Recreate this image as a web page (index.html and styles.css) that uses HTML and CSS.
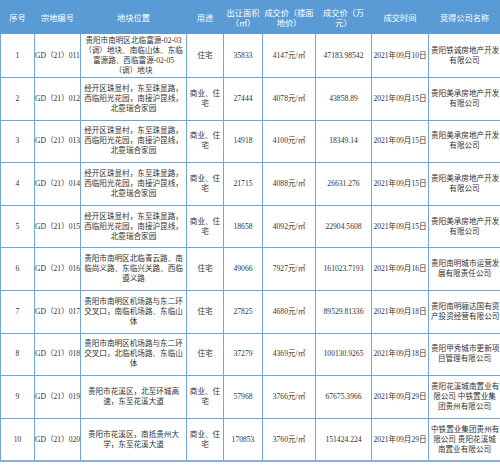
FILE: index.html
```html
<!DOCTYPE html>
<html lang="zh-CN">
<head>
<meta charset="utf-8">
<title>地块成交表</title>
<link rel="stylesheet" href="styles.css">
</head>
<body>
<table class="land">
  <colgroup>
    <col class="c-no"><col class="c-id"><col class="c-loc"><col class="c-use"><col class="c-area"><col class="c-unit"><col class="c-total"><col class="c-date"><col class="c-co">
  </colgroup>
  <thead>
    <tr class="head">
      <th>序号</th><th>宗地编号</th><th>地块位置</th><th>用途</th><th>出让面积<br>（㎡）</th><th>成交价（楼面<br>地价）</th><th>成交价（万<br>元）</th><th>成交时间</th><th>竞得公司名称</th>
    </tr>
  </thead>
  <tbody>
    <tr class="r-first">
      <td>1</td><td class="id">GD（21）011</td>
      <td class="txt">贵阳市南明区北临富源-02-03<br>（调）地块、南临山体、东临<br>富源路、西临富源-02-05<br>（调）地块</td>
      <td>住宅</td><td>35833</td><td>4147元/㎡</td><td>47183.98542</td><td>2021年09月10日</td>
      <td class="txt">贵阳铁诚房地产开发<br>有限公司</td>
    </tr>
    <tr>
      <td>2</td><td class="id">GD（21）012</td>
      <td class="txt">经开区珠显村，东至珠显路，<br>西临阳光花园，南接沪昆线，<br>北靠瑞合家园</td>
      <td>商业、住<br>宅</td><td>27444</td><td>4078元/㎡</td><td>43858.89</td><td>2021年09月15日</td>
      <td class="txt">贵阳美承房地产开发<br>有限公司</td>
    </tr>
    <tr>
      <td>3</td><td class="id">GD（21）013</td>
      <td class="txt">经开区珠显村，东至珠显路，<br>西临阳光花园，南接沪昆线，<br>北靠瑞合家园</td>
      <td>商业、住<br>宅</td><td>14918</td><td>4100元/㎡</td><td>18349.14</td><td>2021年09月15日</td>
      <td class="txt">贵阳美承房地产开发<br>有限公司</td>
    </tr>
    <tr>
      <td>4</td><td class="id">GD（21）014</td>
      <td class="txt">经开区珠显村，东至珠显路，<br>西临阳光花园，南接沪昆线，<br>北靠瑞合家园</td>
      <td>商业、住<br>宅</td><td>21715</td><td>4088元/㎡</td><td>26631.276</td><td>2021年09月15日</td>
      <td class="txt">贵阳美承房地产开发<br>有限公司</td>
    </tr>
    <tr>
      <td>5</td><td class="id">GD（21）015</td>
      <td class="txt">经开区珠显村，东至珠显路，<br>西临阳光花园，南接沪昆线，<br>北靠瑞合家园</td>
      <td>商业、住<br>宅</td><td>18658</td><td>4092元/㎡</td><td>22904.5608</td><td>2021年09月15日</td>
      <td class="txt">贵阳美承房地产开发<br>有限公司</td>
    </tr>
    <tr>
      <td>6</td><td class="id">GD（21）016</td>
      <td class="txt">贵阳市南明区北临青云路、南<br>临尚义路、东临兴关路、西临<br>遵义路</td>
      <td>住宅</td><td>49066</td><td>7927元/㎡</td><td>161023.7193</td><td>2021年09月16日</td>
      <td class="txt">贵阳南明城市运营发<br>展有限责任公司</td>
    </tr>
    <tr>
      <td>7</td><td class="id">GD（21）017</td>
      <td class="txt">贵阳市南明区机场路与东二环<br>交叉口，南临机场路、东临山<br>体</td>
      <td>住宅</td><td>27825</td><td>4680元/㎡</td><td>89529.81336</td><td>2021年09月18日</td>
      <td class="txt">贵阳南明骊达国有资<br>产投资经营有限公司</td>
    </tr>
    <tr>
      <td>8</td><td class="id">GD（21）018</td>
      <td class="txt">贵阳市南明区机场路与东二环<br>交叉口，北临机场路、东临山<br>体</td>
      <td>住宅</td><td>37279</td><td>4369元/㎡</td><td>100130.9265</td><td>2021年09月18日</td>
      <td class="txt">贵阳甲秀城市更新项<br>目管理有限公司</td>
    </tr>
    <tr>
      <td>9</td><td class="id">GD（21）019</td>
      <td class="txt">贵阳市花溪区，北至环城高<br>速，东至花溪大道</td>
      <td>商业、住<br>宅</td><td>57968</td><td>3766元/㎡</td><td>67675.3966</td><td>2021年09月29日</td>
      <td class="txt">贵阳花溪城南置业有<br>限公司 中铁置业集<br>团贵州有限公司</td>
    </tr>
    <tr>
      <td>10</td><td class="id">GD（21）020</td>
      <td class="txt">贵阳市花溪区，南抵贵州大<br>学，东至花溪大道</td>
      <td>商业、住<br>宅</td><td>170853</td><td>3760元/㎡</td><td>151424.224</td><td>2021年09月29日</td>
      <td class="txt">中铁置业集团贵州有<br>限公司 贵阳花溪城<br>南置业有限公司</td>
    </tr>
  </tbody>
</table>
</body>
</html>
```

FILE: styles.css
```css
html, body {
  margin: 0;
  padding: 0;
  background: #ffffff;
}

.land {
  width: 500px;
  table-layout: fixed;
  border-collapse: collapse;
  font-family: "Liberation Serif", "Noto Sans CJK SC", serif;
  font-size: 7.6px;
  line-height: 10px;
  color: #333333;
  border-bottom: 2px solid #7fb0e0;
}

.c-no { width: 34px; }
.c-id { width: 46px; }
.c-loc { width: 106px; }
.c-use { width: 37px; }
.c-area { width: 39px; }
.c-unit { width: 53px; }
.c-total { width: 56px; }
.c-date { width: 57px; }
.c-co { width: 72px; }

.head {
  background: #5b9bd5;
}

.head th {
  height: 32px;
  font-family: "Noto Sans CJK SC", "Noto Sans", sans-serif;
  font-weight: normal;
  font-size: 8.2px;
  line-height: 10.5px;
  color: #ffffff;
  text-align: center;
  vertical-align: middle;
  padding: 0;
  border: 1px solid #5b9bd5;
  white-space: nowrap;
}

.land td {
  border: 1px solid #6fa6dc;
  text-align: center;
  vertical-align: middle;
  padding: 0 1px;
  white-space: nowrap;
  height: 41.6px;
}

.land .r-first td {
  height: 43px;
}

.land td.id {
  padding: 0;
}

.land td.txt {
  padding: 0 2px;
}
```
